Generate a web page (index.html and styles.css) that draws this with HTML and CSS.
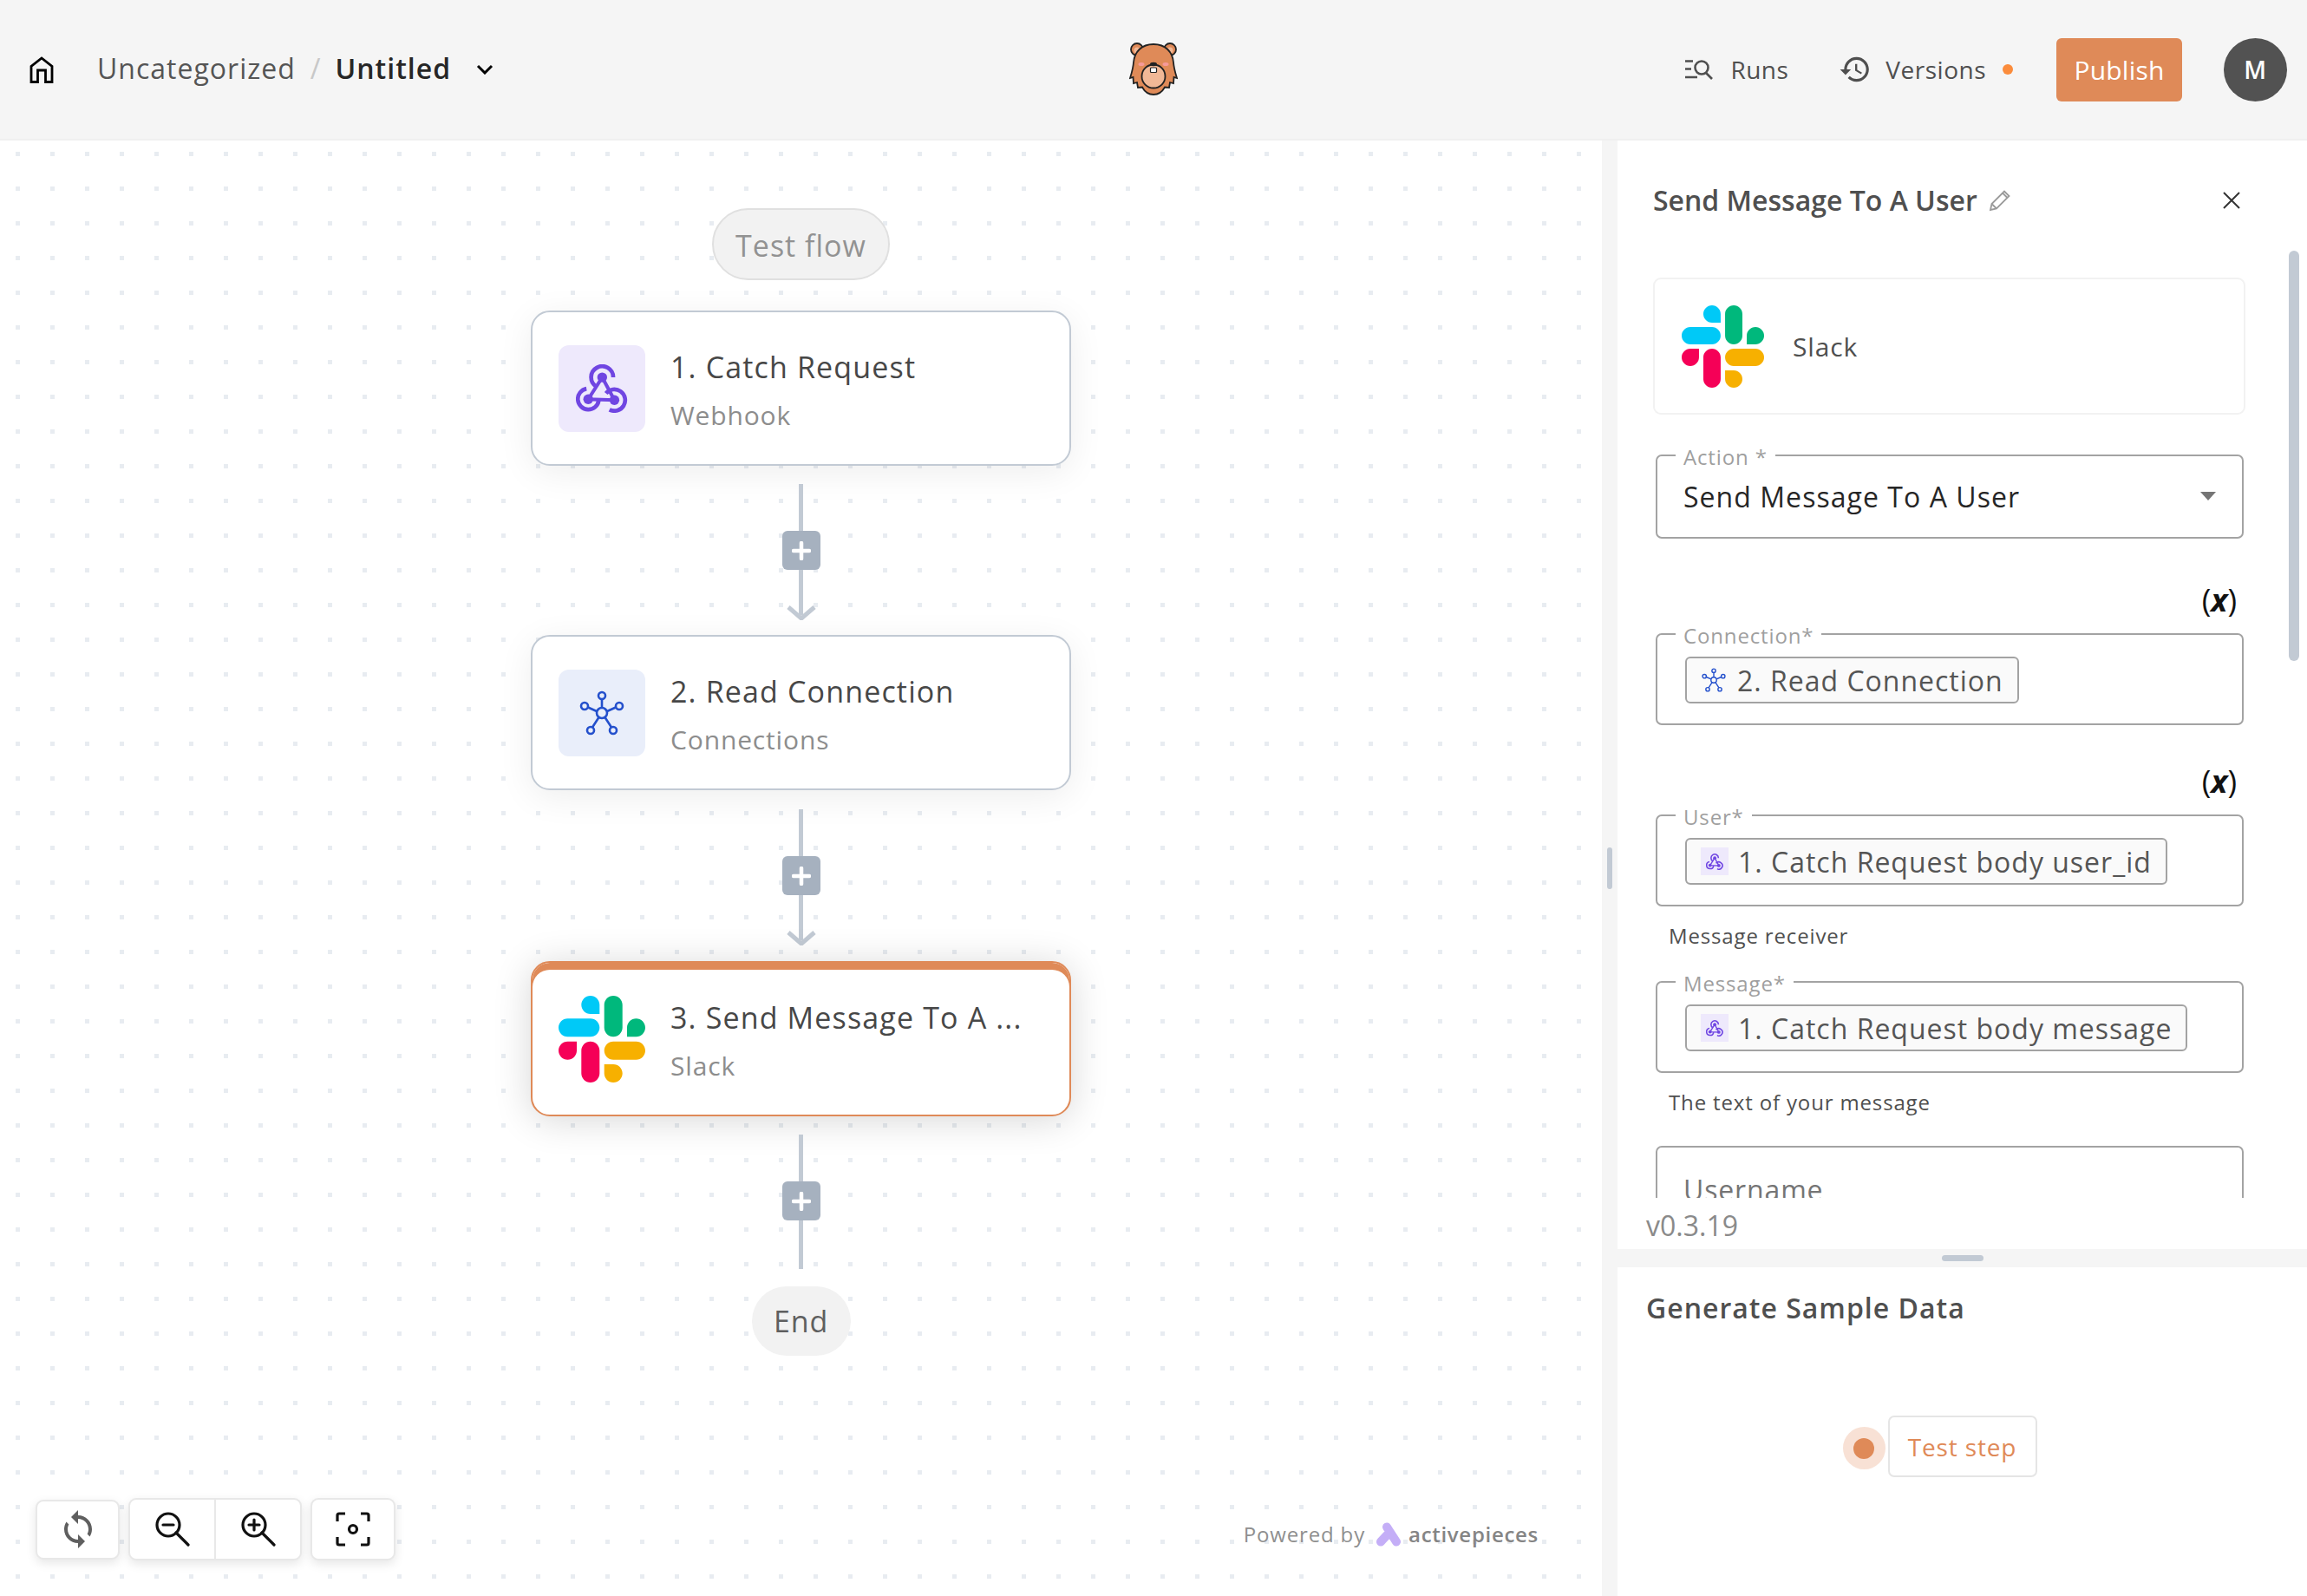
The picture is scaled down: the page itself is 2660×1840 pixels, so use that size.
FILE: index.html
```html
<!DOCTYPE html>
<html lang="en">
<head>
    <meta charset="UTF-8">
    <meta name="viewport" content="width=device-width, initial-scale=1.0">
    <title>Untitled</title>
    <link rel="stylesheet" href="styles.css">
</head>
<body>
    <!-- shared icons -->
    <svg class="defs" width="0" height="0" aria-hidden="true">
        <symbol id="slack" viewBox="0 0 122.8 122.8">
            <path fill="#f50057" d="M25.8 77.6c0 7.1-5.8 12.9-12.9 12.9S0 84.7 0 77.6c0-7.1 5.8-12.9 12.9-12.9h12.9v12.9zM32.3 77.6c0-7.1 5.8-12.9 12.9-12.9s12.9 5.8 12.9 12.9v32.3c0 7.1-5.8 12.9-12.9 12.9s-12.9-5.8-12.9-12.9V77.6z"/>
            <path fill="#00c9f7" d="M45.2 25.8c-7.1 0-12.9-5.8-12.9-12.9S38.1 0 45.2 0s12.9 5.8 12.9 12.9v12.9H45.2zM45.2 32.3c7.1 0 12.9 5.8 12.9 12.9s-5.8 12.9-12.9 12.9H12.9C5.8 58.1 0 52.3 0 45.2s5.8-12.9 12.9-12.9h32.3z"/>
            <path fill="#00b87c" d="M97 45.2c0-7.1 5.8-12.9 12.9-12.9 7.1 0 12.9 5.8 12.9 12.9s-5.8 12.9-12.9 12.9H97V45.2zM90.5 45.2c0 7.1-5.8 12.9-12.9 12.9-7.1 0-12.9-5.8-12.9-12.9V12.9C64.7 5.8 70.5 0 77.6 0c7.1 0 12.9 5.8 12.9 12.9v32.3z"/>
            <path fill="#f7b000" d="M77.6 97c7.1 0 12.9 5.8 12.9 12.9 0 7.1-5.8 12.9-12.9 12.9-7.1 0-12.9-5.8-12.9-12.9V97h12.9zM77.6 90.5c-7.1 0-12.9-5.8-12.9-12.9 0-7.1 5.8-12.9 12.9-12.9h32.3c7.1 0 12.9 5.8 12.9 12.9 0 7.1-5.8 12.9-12.9 12.9H77.6z"/>
        </symbol>
        <symbol id="webhook" viewBox="0 0 178 167">
            <g fill="none" stroke="#7046e2" stroke-width="14">
                <path d="M128 45A38 38 0 1 0 70 77"/>
                <path d="M36 84A36 36 0 1 0 78 124"/>
                <path d="M115 156A37 37 0 1 0 103 100"/>
                <path stroke-width="12" d="M90 45L42 120L132 123ZM90 45L132 123"/>
            </g>
            <circle cx="90" cy="45" r="17" fill="#7046e2"/>
            <circle cx="42" cy="120" r="17" fill="#7046e2"/>
            <circle cx="132" cy="123" r="17" fill="#7046e2"/>
        </symbol>
        <symbol id="hub" viewBox="0 0 52 52">
            <g fill="none" stroke="#2450cc" stroke-width="2.6">
                <circle cx="26" cy="26" r="6"/>
                <circle cx="26" cy="6" r="4"/>
                <circle cx="6" cy="18" r="4"/>
                <circle cx="46" cy="18" r="4"/>
                <circle cx="13" cy="46" r="4"/>
                <circle cx="39" cy="46" r="4"/>
                <path d="M26 10V20M10 19.500L20 24M42 19.500L32 24M15 42.500L22.500 31M37 42.500L29.500 31"/>
            </g>
        </symbol>
        <symbol id="plus" viewBox="0 0 22 22">
            <path d="M11 2V20M2 11H20" fill="none" stroke="#fff" stroke-width="4.500" stroke-linecap="round"/>
        </symbol>
    </svg>

    <header class="topbar">
        <div class="crumbs">
            <svg class="home-icon" width="28" height="31" viewBox="0 0 28 31"><path d="M2 29.500V11.500L14 2L26 11.500V29.500H18.500V16H9.500V29.500Z" fill="none" stroke="#000" stroke-width="2.800"/></svg>
            <span class="crumb">Uncategorized</span>
            <span class="crumb-sep">/</span>
            <span class="crumb-current">Untitled</span>
            <svg class="chevron" width="20" height="12" viewBox="0 0 20 12"><path d="M2 2L10 10L18 2" fill="none" stroke="#000" stroke-width="3"/></svg>
        </div>
        <svg class="bear" width="56" height="62" viewBox="0 0 56 62">
            <g stroke="#222" stroke-width="1.800">
                <circle cx="9" cy="8" r="7" fill="#df8a58"/>
                <circle cx="47" cy="8" r="7" fill="#df8a58"/>
                <circle cx="9" cy="9" r="3.500" fill="#f1b896" stroke="none"/>
                <circle cx="47" cy="9" r="3.500" fill="#f1b896" stroke="none"/>
                <path fill="#df8a58" d="M28 2C14 2 6 11 5 23C4.500 30 2.500 36 1 41L4.500 40L5 47L9 46L10 52L15 51.500C18 57 23 60 28 60C33 60 38 57 41 51.500L46 52L47 46L51 47L51.500 40L55 41C53.500 36 51.500 30 51 23C50 11 42 2 28 2Z"/>
                <circle cx="28" cy="39" r="13.500" fill="#f1b896"/>
            </g>
            <ellipse cx="14" cy="25" rx="3.500" ry="2" fill="#f59a9a"/>
            <ellipse cx="42" cy="25" rx="3.500" ry="2" fill="#f59a9a"/>
            <ellipse cx="28" cy="25" rx="4" ry="2.200" fill="#222"/>
            <rect x="24.500" y="29" width="7" height="5.500" rx="1" fill="#fff" stroke="#222" stroke-width="1.200"/>
        </svg>
        <div class="top-actions">
            <div class="top-link">
                <svg width="34" height="24" viewBox="0 0 34 24"><g fill="none" stroke="#4f4f4f" stroke-width="2.600"><path d="M1 2.500H10M1 11.500H8M1 21H15"/><circle cx="20" cy="10" r="7.500"/><path d="M25 16L32 23"/></g></svg>
                <span>Runs</span>
            </div>
            <div class="top-link versions">
                <svg class="history-icon" width="38" height="38" viewBox="0 0 24 24"><path fill="#4f4f4f" d="M13 3c-4.970 0-9 4.030-9 9H1l3.890 3.890.070.140L9 12H6c0-3.870 3.130-7 7-7s7 3.130 7 7-3.130 7-7 7c-1.930 0-3.680-.790-4.940-2.060l-1.420 1.420C8.270 19.990 10.510 21 13 21c4.970 0 9-4.030 9-9s-4.030-9-9-9zm-1 5v5l4.280 2.540.720-1.210-3.500-2.080V8H12z"/></svg>
                <span>Versions</span>
                <i class="status-dot"></i>
            </div>
            <div class="publish">Publish</div>
            <div class="avatar">M</div>
        </div>
    </header>

    <main class="workspace">
        <section class="canvas">
            <div class="flow">
                <div class="pill pill-test">Test flow</div>

                <div class="step">
                    <div class="step-icon webhook-bg"><svg width="60" height="56"><use href="#webhook"/></svg></div>
                    <div class="step-text">
                        <div class="step-title">1. Catch Request</div>
                        <div class="step-sub">Webhook</div>
                    </div>
                </div>

                <div class="connector first">
                    <div class="wire wire-top"></div>
                    <div class="add"><svg width="22" height="22"><use href="#plus"/></svg></div>
                    <div class="wire wire-mid"></div>
                    <svg class="arrow" width="34" height="17" viewBox="0 0 34 17"><path d="M2 2L17 15L32 2" fill="none" stroke="#c2cad4" stroke-width="5"/></svg>
                </div>

                <div class="step">
                    <div class="step-icon hub-bg"><svg width="52" height="52"><use href="#hub"/></svg></div>
                    <div class="step-text">
                        <div class="step-title">2. Read Connection</div>
                        <div class="step-sub">Connections</div>
                    </div>
                </div>

                <div class="connector second">
                    <div class="wire wire-top"></div>
                    <div class="add"><svg width="22" height="22"><use href="#plus"/></svg></div>
                    <div class="wire wire-mid"></div>
                    <svg class="arrow" width="34" height="17" viewBox="0 0 34 17"><path d="M2 2L17 15L32 2" fill="none" stroke="#c2cad4" stroke-width="5"/></svg>
                </div>

                <div class="step selected">
                    <div class="step-icon"><svg width="100" height="100"><use href="#slack"/></svg></div>
                    <div class="step-text">
                        <div class="step-title">3. Send Message To A ...</div>
                        <div class="step-sub">Slack</div>
                    </div>
                </div>

                <div class="connector last">
                    <div class="wire wire-top"></div>
                    <div class="add"><svg width="22" height="22"><use href="#plus"/></svg></div>
                    <div class="wire wire-end"></div>
                </div>

                <div class="pill pill-end">End</div>
            </div>

            <div class="tools">
                <div class="tool tool-sync">
                    <svg width="48" height="48" viewBox="0 0 24 24"><path fill="#5f5f5f" d="M12 4V1L8 5l4 4V6c3.310 0 6 2.690 6 6 0 1.010-.250 1.970-.700 2.800l1.460 1.460C19.540 15.030 20 13.570 20 12c0-4.420-3.580-8-8-8zm0 14c-3.310 0-6-2.690-6-6 0-1.010.250-1.970.700-2.800L5.240 7.740C4.460 8.970 4 10.430 4 12c0 4.420 3.580 8 8 8v3l4-4-4-4v3z"/></svg>
                </div>
                <div class="tool-group">
                    <div class="tool-cell">
                        <svg width="40" height="40" viewBox="0 0 40 40"><g fill="none" stroke="#111" stroke-width="3.200" stroke-linecap="round"><circle cx="15" cy="15" r="13"/><path d="M24 24L38 38M9 15H21"/></g></svg>
                    </div>
                    <div class="tool-cell">
                        <svg width="40" height="40" viewBox="0 0 40 40"><g fill="none" stroke="#111" stroke-width="3.200" stroke-linecap="round"><circle cx="15" cy="15" r="13"/><path d="M24 24L38 38M9 15H21M15 9V21"/></g></svg>
                    </div>
                </div>
                <div class="tool">
                    <svg width="40" height="40" viewBox="0 0 40 40"><g fill="none" stroke="#111" stroke-width="3.200"><path d="M2 11V4Q2 2 4 2H11M29 2H36Q38 2 38 4V11M38 29V36Q38 38 36 38H29M11 38H4Q2 38 2 36V29"/><circle cx="20" cy="20" r="4.500"/></g></svg>
                </div>
            </div>

            <div class="powered">
                <span class="by">Powered by</span>
                <svg width="30" height="28" viewBox="0 0 30 28"><path d="M13 5.500L24 22.500M13 15L6 22.500" fill="none" stroke="#c4aef7" stroke-width="10" stroke-linecap="round"/></svg>
                <span class="brand">activepieces</span>
            </div>
        </section>

        <div class="gutter"><i></i></div>

        <aside class="panel">
            <div class="panel-head">
                <div class="panel-title">Send Message To A User</div>
                <svg class="pencil" width="26" height="26" viewBox="0 0 26 26"><path d="M2 24L3.500 17L18 2.500L23.500 8L9 22.500ZM3.500 17L9 22.500M16 4.500L21.500 10" fill="none" stroke="#9a9a9a" stroke-width="1.800"/></svg>
                <svg class="close" width="22" height="22" viewBox="0 0 22 22"><path d="M2 2L20 20M20 2L2 20" fill="none" stroke="#333" stroke-width="2"/></svg>
            </div>

            <div class="form">
                <div class="piece-card">
                    <svg width="95" height="95"><use href="#slack"/></svg>
                    <span>Slack</span>
                </div>

                <fieldset class="field field-action">
                    <legend>Action *</legend>
                    <div class="select-value">
                        <span>Send Message To A User</span>
                        <i class="caret"></i>
                    </div>
                </fieldset>

                <div class="var-row"><span class="var-btn">(<b>x</b>)</span></div>
                <fieldset class="field">
                    <legend>Connection*</legend>
                    <div class="chip"><svg width="28" height="28"><use href="#hub"/></svg><span>2. Read Connection</span></div>
                </fieldset>

                <div class="var-row var-row-2"><span class="var-btn">(<b>x</b>)</span></div>
                <fieldset class="field">
                    <legend>User*</legend>
                    <div class="chip"><span class="chip-icon"><svg width="20" height="19"><use href="#webhook"/></svg></span><span>1. Catch Request body user_id</span></div>
                </fieldset>
                <p class="hint">Message receiver</p>

                <fieldset class="field field-message">
                    <legend>Message*</legend>
                    <div class="chip"><span class="chip-icon"><svg width="20" height="19"><use href="#webhook"/></svg></span><span>1. Catch Request body message</span></div>
                </fieldset>
                <p class="hint hint-2">The text of your message</p>

                <div class="field-plain">Username</div>
            </div>

            <div class="version">v0.3.19</div>
            <div class="split"><i></i></div>

            <div class="sample">
                <div class="sample-title">Generate Sample Data</div>
                <div class="test-row">
                    <div class="test-btn">
                        <i class="pulse"><i></i></i>
                        Test step
                    </div>
                </div>
            </div>

            <div class="scroll-thumb"></div>
        </aside>
    </main>
</body>
</html>
```

FILE: styles.css
```css
* {
    box-sizing: border-box;
}

body {
    margin: 0;
    height: 100vh;
    overflow: hidden;
    display: flex;
    flex-direction: column;
    background: #fff;
    font-family: "Open Sans", "Liberation Sans", sans-serif;
    font-size: 30px;
    letter-spacing: 0.85px;
    color: #4f4f4f;
}

i {
    display: block;
    font-style: normal;
}

.defs {
    position: absolute;
}

/* top bar */
.topbar {
    flex: none;
    height: 162px;
    display: grid;
    grid-template-columns: 1fr auto 1fr;
    align-items: center;
    padding: 0 23px;
    background: #f5f5f5;
    border-bottom: 2px solid #f0f0f0;
}

.crumbs {
    display: flex;
    align-items: center;
    padding-left: 11px;
    font-size: 32px;
    letter-spacing: 1px;
}

.home-icon {
    margin-right: 50px;
}

.crumb,
.crumb-sep,
.crumb-current {
    padding-bottom: 3px;
}

.crumb {
    color: #555;
}

.crumb-sep {
    margin: 0 16px 0 17px;
    color: #c8c8c8;
}

.crumb-current {
    font-weight: 600;
    letter-spacing: 1px;
    color: #262626;
}

.chevron {
    margin-left: 29px;
}

.top-actions {
    display: flex;
    align-items: center;
    justify-content: flex-end;
    font-size: 28px;
    letter-spacing: 0.5px;
}

.top-link {
    display: flex;
    align-items: center;
    gap: 19px;
    margin-right: 58px;
}

.top-link.versions {
    margin-right: 50px;
}

.history-icon {
    margin-right: -3px;
}

.status-dot {
    width: 12px;
    height: 12px;
    border-radius: 50%;
    background: #fb8c3c;
}

.publish {
    width: 145px;
    height: 73px;
    display: flex;
    align-items: center;
    justify-content: center;
    border-radius: 6px;
    background: #df8a58;
    color: #fff;
    font-size: 30px;
    font-weight: 500;
    letter-spacing: 0.2px;
}

.avatar {
    width: 73px;
    height: 73px;
    margin-left: 48px;
    display: flex;
    align-items: center;
    justify-content: center;
    border-radius: 50%;
    background: #525252;
    color: #fff;
    font-size: 28px;
    font-weight: 600;
}

/* main area */
.workspace {
    flex: 1;
    min-height: 0;
    display: flex;
}

.canvas {
    position: relative;
    width: 1847px;
    overflow: hidden;
    background: #fff;
}

/* square grid dots */
.canvas::before {
    content: "";
    position: absolute;
    inset: 0;
    background-image: linear-gradient(#e8ecf1 5px, transparent 5px);
    background-size: 40px 40px;
    background-position: 0 13px;
    -webkit-mask-image: linear-gradient(90deg, #000 5px, transparent 5px);
    -webkit-mask-size: 40px 40px;
    -webkit-mask-position: 18px 0;
}

.flow {
    position: relative;
    display: flex;
    flex-direction: column;
    align-items: center;
    padding-top: 78px;
}

.pill {
    display: flex;
    align-items: center;
    justify-content: center;
    border-radius: 42px;
    background: #f2f2f2;
}

.pill-test {
    width: 205px;
    height: 83px;
    margin-bottom: 35px;
    padding-top: 2px;
    border: 2px solid #e0e0e0;
    color: #929292;
    font-size: 34px;
    letter-spacing: 1px;
}

.pill-end {
    width: 114px;
    height: 80px;
    margin-top: 19px;
    color: #5f5f5f;
    font-size: 34px;
}

.step {
    width: 623px;
    height: 179px;
    display: flex;
    align-items: center;
    gap: 29px;
    padding: 0 30px;
    border: 2px solid #c2cad4;
    border-radius: 22px;
    background: #fff;
    box-shadow: 0 8px 40px rgba(0, 0, 0, 0.07);
}

.step.selected {
    border-color: #df8a58;
    box-shadow: inset 0 8px 0 #df8a58, 0 4px 44px rgba(0, 0, 0, 0.16);
}

.step-icon {
    width: 100px;
    height: 100px;
    flex: none;
    display: flex;
    align-items: center;
    justify-content: center;
    border-radius: 12px;
}

.webhook-bg {
    background: #eee9fc;
}

.hub-bg {
    background: #e9eefa;
}

.step-text {
    padding-top: 6px;
}

.step-title {
    font-size: 34px;
    line-height: 44px;
    margin-bottom: 12px;
    letter-spacing: 1.15px;
    color: #474747;
}

.step-sub {
    font-size: 30px;
    line-height: 44px;
    color: #8d8d8d;
}

.connector {
    display: flex;
    flex-direction: column;
    align-items: center;
    padding-top: 21px;
}

/* the middle step sits a touch higher than an even spacing would put it */
.connector.first {
    height: 195px;
}

.connector.second {
    height: 197px;
    padding-top: 22px;
}

.connector.last {
    height: 177px;
}

.wire {
    width: 5px;
    background: #c2cad4;
}

.wire-top {
    height: 54px;
}

.wire-mid {
    height: 52px;
}

.wire-end {
    height: 56px;
}

.arrow {
    margin-top: -11px;
}

.add {
    width: 44px;
    height: 45px;
    display: flex;
    align-items: center;
    justify-content: center;
    border-radius: 6px;
    background: #a6b1bf;
}

/* bottom-left tools */
.tools {
    position: absolute;
    left: 41px;
    bottom: 41px;
    display: flex;
    align-items: center;
    gap: 10px;
}

.tool,
.tool-group {
    display: flex;
    align-items: center;
    justify-content: center;
    height: 72px;
    border: 2px solid #e8e8e8;
    border-radius: 9px;
    background: #fff;
    box-shadow: 0 4px 12px rgba(0, 0, 0, 0.1);
}

.tool {
    width: 98px;
}

.tool-sync {
    width: 97px;
    height: 69px;
}

.tool-group {
    width: 200px;
}

.tool-cell {
    flex: 1;
    height: 100%;
    display: flex;
    align-items: center;
    justify-content: center;
}

.tool-cell + .tool-cell {
    border-left: 2px solid #e8e8e8;
}

.powered {
    position: absolute;
    right: 73px;
    bottom: 55px;
    display: flex;
    align-items: center;
    gap: 8px;
    font-size: 24px;
    letter-spacing: 0.7px;
    color: #8f8f8f;
}

.powered .by {
    margin-right: 4px;
    letter-spacing: 0.85px;
}

.powered .brand {
    font-weight: 600;
    color: #858585;
}

.gutter {
    width: 18px;
    flex: none;
    display: flex;
    align-items: center;
    justify-content: center;
    background: #f5f5f5;
}

.gutter i {
    width: 6px;
    height: 48px;
    border-radius: 3px;
    background: #c2cad4;
}

/* right panel */
.panel {
    position: relative;
    flex: 1;
    display: flex;
    flex-direction: column;
    background: #fff;
}

.panel-head {
    flex: none;
    height: 139px;
    display: flex;
    align-items: center;
    padding: 0 0 2px 41px;
}

.panel-title {
    font-size: 32px;
    font-weight: 600;
    letter-spacing: 0;
    color: #4f4f4f;
}

.pencil {
    margin-left: 13px;
}

.close {
    margin-left: auto;
    margin-right: 76px;
}

.form {
    flex: none;
    height: 1080px;
    overflow: hidden;
    padding: 19px 71px 0 41px;
}

.piece-card {
    height: 158px;
    display: flex;
    align-items: center;
    gap: 33px;
    padding-left: 31px;
    border: 2px solid #f2f2f2;
    border-radius: 9px;
}

.field {
    min-width: 0;
    margin: 0 2px 0 3px;
    padding: 0 30px 23px;
    border: 2px solid #a3a3a3;
    border-radius: 7px;
}

.field legend {
    margin-left: -9px;
    padding: 3px 9px 0;
    font-size: 24px;
    line-height: 21px;
    color: #9f9f9f;
}

.field-action {
    margin-top: 35px;
    padding-bottom: 12px;
}

.select-value {
    height: 70px;
    display: flex;
    align-items: center;
    justify-content: space-between;
    color: #262626;
    font-size: 32px;
    letter-spacing: 1.05px;
}

.caret {
    border-left: 9px solid transparent;
    border-right: 9px solid transparent;
    border-top: 10px solid #757575;
}

.var-row {
    display: flex;
    justify-content: flex-end;
    height: 34px;
    margin: 57px 10px 7px 0;
}

.var-row-2 {
    margin-top: 51px;
}

.var-btn {
    font-size: 36px;
    line-height: 28px;
    letter-spacing: 0;
    color: #111;
}

.var-btn b {
    font-style: italic;
    font-weight: 700;
}

.chip {
    width: max-content;
    height: 54px;
    margin: 14px 0 0 2px;
    display: flex;
    align-items: center;
    gap: 13px;
    padding: 0 16px 0 17px;
    border: 2px solid #a3a3a3;
    border-radius: 6px;
    background: #fafafa;
    font-size: 32px;
    letter-spacing: 1px;
    color: #555;
}

.chip-icon {
    width: 32px;
    height: 32px;
    margin: 0 -2px 0 -1px;
    display: flex;
    align-items: center;
    justify-content: center;
    background: #eee9fc;
}

.hint {
    margin: 18px 0 25px 18px;
    font-size: 24px;
    line-height: 32px;
    color: #4f4f4f;
}

.hint-2 {
    margin-bottom: 34px;
}

.field-plain {
    height: 100px;
    margin: 0 2px 0 3px;
    padding: 29px 30px 0;
    border: 2px solid #a3a3a3;
    border-radius: 7px;
    font-size: 32px;
    line-height: 40px;
    color: #757575;
}

.version {
    flex: none;
    height: 59px;
    padding: 12px 0 0 33px;
    font-size: 32px;
    line-height: 40px;
    letter-spacing: 0;
    color: #8a8a8a;
}

.split {
    flex: none;
    height: 21px;
    display: flex;
    align-items: center;
    justify-content: center;
    background: #f5f5f5;
}

.split i {
    width: 48px;
    height: 7px;
    border-radius: 4px;
    background: #c2cad4;
}

.sample {
    flex: 1;
    padding-top: 27px;
}

.sample-title {
    padding-left: 33px;
    font-size: 32px;
    font-weight: 600;
    line-height: 40px;
    letter-spacing: 1px;
    color: #4f4f4f;
}

.test-row {
    display: flex;
    justify-content: center;
    margin-top: 104px;
}

.test-btn {
    position: relative;
    width: 172px;
    height: 71px;
    display: flex;
    align-items: center;
    justify-content: center;
    border: 2px solid #e5e5e5;
    border-radius: 7px;
    color: #df8a58;
    font-size: 28px;
}

.pulse {
    position: absolute;
    right: calc(100% + 5px);
    top: 11px;
    width: 49px;
    height: 49px;
    display: flex;
    align-items: center;
    justify-content: center;
    border-radius: 50%;
    background: #f8e1d5;
}

.pulse i {
    width: 24px;
    height: 24px;
    border-radius: 50%;
    background: #df8a58;
}

.scroll-thumb {
    position: absolute;
    top: 127px;
    right: 9px;
    width: 12px;
    height: 473px;
    border-radius: 6px;
    background: #c2cad4;
}
```
